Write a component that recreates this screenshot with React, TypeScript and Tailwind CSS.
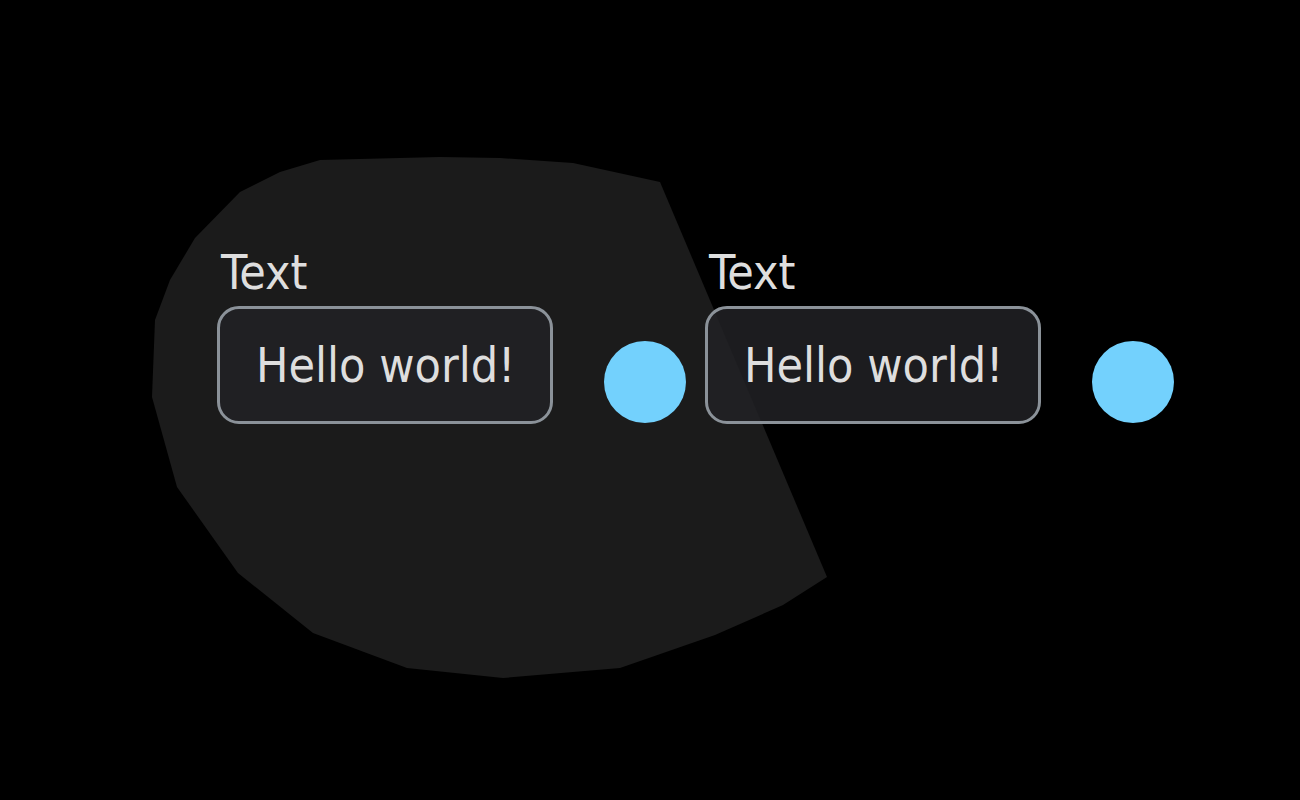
import React from "react";

const blobPoints =
  "320,160 440,157 500,158 573,163 660,182 827,577 783,605 715,635 620,668 503,678 407,668 313,633 238,573 177,487 152,397 155,320 170,280 195,238 240,192 280,172";

function Field({ label, value }: { label: string; value: string }) {
  return (
    <div className="flex items-end">
      <div className="flex flex-col w-[336px]">
        <span className="pl-[4px] text-[48px] leading-none text-[#dedede]">{label}</span>
        <div className="mt-[10px] h-[118px] flex items-center rounded-[22px] border-[3px] border-[#8b9299] bg-[rgba(33,33,37,0.85)] pl-[36px]">
          <span className="text-[48px] leading-none text-[#dedede]">{value}</span>
        </div>
      </div>
      <div className="ml-[51px] mr-[19px] mb-px h-[82px] w-[82px] rounded-full bg-[#73d1fd]" />
    </div>
  );
}

export default function App() {
  return (
    <div
      className="relative h-[800px] w-full overflow-hidden bg-black font-stretch-condensed"
      style={{ fontFamily: '"DejaVu Sans Condensed", "DejaVu Sans", sans-serif' }}
    >
      <svg className="absolute inset-0" width="1300" height="800" viewBox="0 0 1300 800">
        <polygon points={blobPoints} fill="#1b1b1b" />
      </svg>
      <div className="relative flex pl-[217px] pt-[248px]">
        <Field label="Text" value="Hello world!" />
        <Field label="Text" value="Hello world!" />
      </div>
    </div>
  );
}
